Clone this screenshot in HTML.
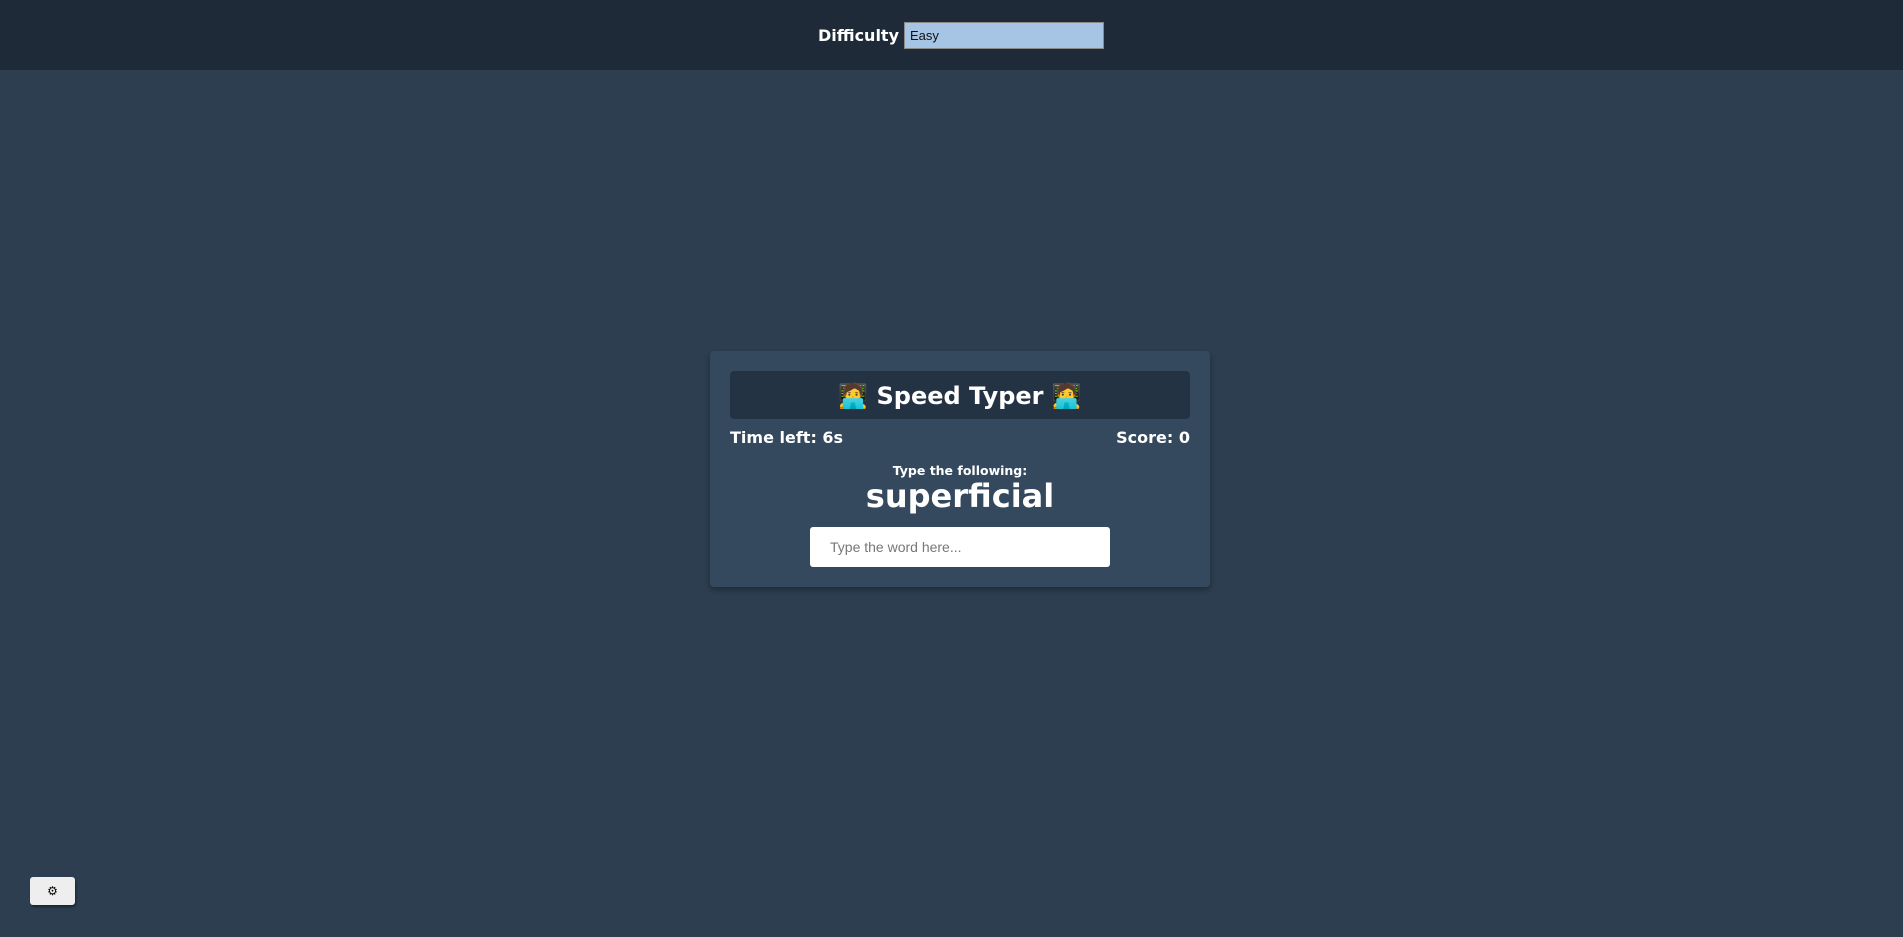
<!DOCTYPE html>
<html><head><meta charset="utf-8"><style>
html,body{margin:0;padding:0;width:1903px;height:937px;background:#2c3e50;overflow:hidden;font-family:"DejaVu Sans",Verdana,sans-serif;color:#fff}
.hdr{position:absolute;left:0;top:0;width:1903px;height:70px;background:#1f2a38}
.hdr .lbl{position:absolute;right:1004px;top:22px;font-weight:bold;font-size:16px;line-height:27px}
.hdr .sel{position:absolute;left:904px;top:22px;background:#a6c4e3;border:1px solid #8a8a8a;color:#111;font-family:"Liberation Sans",Arial,sans-serif;font-size:13px;line-height:25px;padding-left:5px;box-sizing:border-box;width:200px;height:27px}
.card{position:absolute;left:710px;top:351px;width:500px;height:236px;background:#34495e;border-radius:4px;box-shadow:0 3px 6px rgba(0,0,0,.3)}
.title{position:absolute;left:20px;top:20px;width:460px;height:48px;background:#243343;border-radius:4px;text-align:center;font-weight:bold;font-size:24px;line-height:50px}
.tl{position:absolute;left:20px;top:77px;font-weight:bold;font-size:16px}
.sc{position:absolute;right:20px;top:77px;font-weight:bold;font-size:16px}
.tf{position:absolute;left:0;width:500px;top:112px;text-align:center;font-weight:bold;font-size:12.5px}
.w{position:absolute;left:0;width:500px;top:126px;text-align:center;font-weight:bold;font-size:32px}
.inp{position:absolute;left:100px;top:176px;width:300px;height:40px;background:#fff;border-radius:3px;color:#777;font-family:"Liberation Sans",Arial,sans-serif;font-size:14px;line-height:40px;padding-left:20px;box-sizing:border-box}
.btn{position:absolute;left:30px;top:877px;width:45px;height:28px;background:#eee;border-radius:3px;box-shadow:1px 2px 2px rgba(0,0,0,.4);color:#000;text-align:center;line-height:28px;font-size:12px;font-weight:bold}
</style></head><body>
<div class="hdr"><span class="lbl">Difficulty</span><div class="sel">Easy</div></div>
<div class="card">
<div class="title">🧑‍💻 Speed Typer 🧑‍💻</div>
<div class="tl">Time left: 6s</div>
<div class="sc">Score: 0</div>
<div class="tf">Type the following:</div>
<div class="w">superficial</div>
<div class="inp">Type the word here...</div>
</div>
<div class="btn">⚙</div>
</body></html>
